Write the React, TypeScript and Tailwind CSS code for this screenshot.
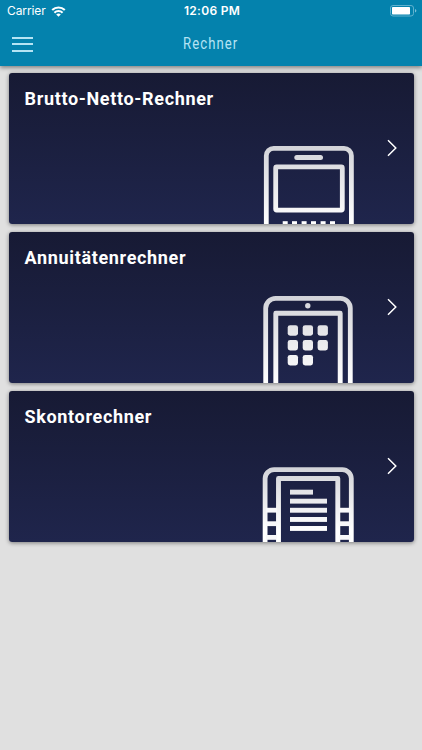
import React from "react";

interface Calculator {
  title: string;
  icon: React.ReactNode;
}

const PhoneCalculatorIcon = () => (
  <svg className="block h-20 w-[100px]" viewBox="260 144 100 80" fill="none">
    <defs>
      <linearGradient id="fade-phone" gradientUnits="userSpaceOnUse" x1="0" y1="145" x2="0" y2="224">
        <stop offset="0" stopColor="#d2d3d8" />
        <stop offset="1" stopColor="#ffffff" />
      </linearGradient>
    </defs>
    <path d="M266.3 230V155.7a7.4 7.4 0 0 1 7.4-7.4H344a7.4 7.4 0 0 1 7.4 7.4V230" stroke="url(#fade-phone)" strokeWidth="4.8" />
    <rect x="294.3" y="155.1" width="28.7" height="5" rx="2.5" fill="url(#fade-phone)" />
    <rect x="275.7" y="166.9" width="66.6" height="43.2" rx="1" stroke="url(#fade-phone)" strokeWidth="4.8" />
    {[282.7, 292, 301.6, 311, 320.6, 330].map((x) => (
      <rect key={x} x={x} y="221.2" width="5" height="5" fill="#fff" />
    ))}
  </svg>
);

const TabletIcon = () => (
  <svg className="block h-[90px] w-[100px]" viewBox="260 293 100 90" fill="none">
    <defs>
      <linearGradient id="fade-tablet" gradientUnits="userSpaceOnUse" x1="0" y1="295" x2="0" y2="383">
        <stop offset="0" stopColor="#d2d3d8" />
        <stop offset="1" stopColor="#ffffff" />
      </linearGradient>
    </defs>
    <path d="M265.7 390V308.3a10 10 0 0 1 10-10H340.3a10 10 0 0 1 10 10V390" stroke="url(#fade-tablet)" strokeWidth="4.8" />
    <circle cx="307.8" cy="305.8" r="2.7" fill="url(#fade-tablet)" />
    <path d="M275.8 390V313.2H340.2V390" stroke="url(#fade-tablet)" strokeWidth="4.9" strokeLinejoin="round" />
    {[325.2, 340, 354.9].map((y, row) =>
      [287.7, 302.7, 317.6]
        .slice(0, row === 2 ? 2 : 3)
        .map((x) => (
          <rect key={`${x}-${y}`} x={x} y={y} width="10.3" height="10.5" rx="2.4" fill="url(#fade-tablet)" />
        ))
    )}
  </svg>
);

const DocumentIcon = () => (
  <svg className="block h-20 w-[100px]" viewBox="260 462 100 80" fill="none">
    <defs>
      <linearGradient id="fade-document" gradientUnits="userSpaceOnUse" x1="0" y1="467" x2="0" y2="530">
        <stop offset="0" stopColor="#d2d3d8" />
        <stop offset="1" stopColor="#ffffff" />
      </linearGradient>
    </defs>
    <path d="M265.1 550V478.6a9 9 0 0 1 9-9H342.3a9 9 0 0 1 9 9V550" stroke="url(#fade-document)" strokeWidth="4.8" />
    <path d="M278.5 550V478.5H337.8V550" stroke="url(#fade-document)" strokeWidth="4.9" strokeLinejoin="round" />
    {[507.8, 521.3, 535].map((y) => (
      <g key={y} fill="#f8f8fa">
        <rect x="266" y={y} width="11" height="4.8" />
        <rect x="339.5" y={y} width="11" height="4.8" />
      </g>
    ))}
    {[489.7, 498.7, 507.8, 517, 526].map((y, i) => (
      <rect key={y} x="290" y={y} width={i === 0 ? 23 : 37} height="4.9" fill="url(#fade-document)" />
    ))}
  </svg>
);

const calculators: Calculator[] = [
  { title: "Brutto-Netto-Rechner", icon: <PhoneCalculatorIcon /> },
  { title: "Annuitätenrechner", icon: <TabletIcon /> },
  { title: "Skontorechner", icon: <DocumentIcon /> },
];

const StatusBar = () => (
  <div className="grid h-[22px] grid-cols-[1fr_auto_1fr] items-center pl-[7px] pr-[5px] font-['Inter',sans-serif] text-white">
    <div className="flex items-center gap-[5px]">
      <span className="text-[12px] leading-none tracking-[-0.1px]">Carrier</span>
      <svg className="h-[11px] w-[15px]" viewBox="0 0 15 11" fill="none" stroke="currentColor" strokeWidth="2.1">
        <path d="M1.2 4.1a9.1 9.1 0 0 1 12.6 0" />
        <path d="M3.4 6.7a5.9 5.9 0 0 1 8.2 0" />
        <path d="M7.5 10.8 5.2 8.5a3.3 3.3 0 0 1 4.6 0Z" fill="currentColor" stroke="none" />
      </svg>
    </div>
    <span className="text-center text-[12px] font-semibold leading-none tracking-[0.3px]">
      12:06 PM
    </span>
    <svg className="h-3 w-[27px] justify-self-end" viewBox="0 0 27 12">
      <rect x=".5" y=".5" width="23" height="10.5" rx="2.5" fill="none" stroke="#5fb1ce" />
      <rect x="2" y="2" width="18" height="7.5" rx=".7" fill="#fff" />
      <path d="M25 4v3.6c1.9-.8 1.9-2.8 0-3.6Z" fill="#7cc0d8" />
    </svg>
  </div>
);

const CalculatorCard = ({ title, icon }: Calculator) => (
  <button className="relative block h-[150.7px] w-full overflow-hidden rounded-[3px] bg-linear-to-b from-[#171a34] to-[#1f254c] text-left">
    <span className="absolute left-[16px] top-[13.4px] text-[18px] font-bold leading-6 tracking-[0.66px] text-white">
      {title}
    </span>
    <span className="absolute bottom-0 left-[251.5px]">{icon}</span>
    <svg
      className="absolute right-[15.5px] top-[65.7px] h-[18px] w-[11px]"
      viewBox="0 0 11 18"
      fill="none"
      stroke="#fff"
      strokeWidth="1.5"
    >
      <path d="M1 1.2 8.8 9 1 16.8" />
    </svg>
  </button>
);

export default function App() {
  return (
    <div className="min-h-screen bg-[#e0e0e0] font-['Roboto',sans-serif]">
      {/* Header */}
      <header className="relative h-[66px] bg-[#0482ad] shadow-[0_2px_4px_rgba(0,0,0,0.4)]">
        <StatusBar />
        <div className="grid h-11 grid-cols-[1fr_auto_1fr] items-center pl-3">
          <button aria-label="Menü" className="flex h-[15px] w-[21px] flex-col justify-between">
            <span className="h-[2px] bg-[#b5e4f4]" />
            <span className="h-[2px] bg-[#b5e4f4]" />
            <span className="h-[2px] bg-[#b5e4f4]" />
          </button>
          <h1 className="mr-[13px] scale-x-[0.82] text-[16px] font-normal leading-none tracking-[1.3px] text-[#b5e4f4]">
            Rechner
          </h1>
        </div>
      </header>

      {/* Calculator list */}
      <main className="flex flex-col gap-[8.3px] px-[8.5px] pt-[7.3px]">
        {calculators.map((calculator) => (
          <div key={calculator.title} className="rounded-[3px] shadow-[0_1px_4px_rgba(0,0,0,0.45)]">
            <CalculatorCard {...calculator} />
          </div>
        ))}
      </main>
    </div>
  );
}
